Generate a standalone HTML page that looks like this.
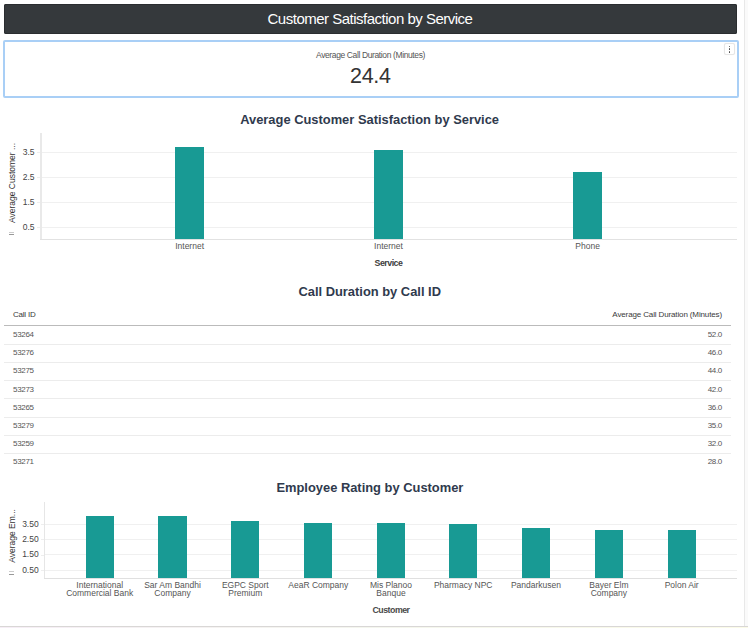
<!DOCTYPE html>
<html><head><meta charset="utf-8">
<style>
html,body{margin:0;padding:0;width:748px;height:628px;overflow:hidden;background:#fff;}
body{position:relative;font-family:"Liberation Sans",sans-serif;}
.a{position:absolute;white-space:nowrap;}
.c{transform:translateX(-50%);text-align:center;}
.r{transform:translateX(-100%);text-align:right;}
.hdr{left:4px;top:4px;width:732.7px;height:30px;background:#35393c;border-radius:2px;box-shadow:inset 0 0 0 1px #2a2d30;}
.kpi{left:3px;top:40px;width:732px;height:54px;border:2px solid #a9cff6;border-radius:2px;}
.menu{left:724px;top:43.2px;width:9px;height:10px;border:1px solid #e6e6e6;border-radius:2px;background:#fff;box-shadow:0 0 1px rgba(0,0,0,0.08);}
.dot{position:absolute;left:3.6px;width:1.8px;height:1.8px;background:#444;border-radius:1px;}
.ttl{font-weight:bold;font-size:12.9px;line-height:12.9px;color:#2f3a4d;}
.grid{position:absolute;height:1px;background:#f0f0f0;}
.bar{position:absolute;background:#189a94;}
.tick{font-size:8.5px;line-height:8.5px;color:#444;}
.xl{font-size:8.5px;line-height:8px;color:#555;}
.td{font-size:8px;line-height:8px;color:#555;letter-spacing:-0.3px;}
.sep{position:absolute;left:4px;width:727px;height:1px;background:#ececec;}
</style></head><body>
<!-- header -->
<div class="a hdr"></div>
<div class="a c" style="left:370px;top:10.7px;font-size:15px;line-height:15px;color:#fff;letter-spacing:-0.5px;">Customer Satisfaction by Service</div>

<!-- KPI -->
<div class="a kpi"></div>
<div class="a menu"><div class="dot" style="top:1.5px;width:1.6px;height:1.6px"></div><div class="dot" style="top:4.3px;width:1.6px;height:1.6px"></div><div class="dot" style="top:7.1px;width:1.6px;height:1.6px"></div></div>
<div class="a c" style="left:370.5px;top:50.5px;font-size:8.5px;line-height:8.5px;color:#555;letter-spacing:-0.38px;">Average Call Duration (Minutes)</div>
<div class="a c" style="left:370.3px;top:66.2px;font-size:21.5px;line-height:21.5px;color:#333;letter-spacing:-0.3px;">24.4</div>

<!-- chart 1 -->
<div class="a c ttl" style="left:369.6px;top:113.6px;">Average Customer Satisfaction by Service</div>
<div class="grid" style="left:40px;top:152px;width:697px;"></div>
<div class="grid" style="left:40px;top:177px;width:697px;"></div>
<div class="grid" style="left:40px;top:202px;width:697px;"></div>
<div class="grid" style="left:40px;top:226.5px;width:697px;"></div>
<div class="a" style="left:40px;top:132.5px;width:1.5px;height:107px;background:#e9e9e9;"></div>
<div class="a" style="left:40px;top:239.2px;width:697px;height:1.2px;background:#e2e2e2;"></div>
<div class="a" style="left:36.7px;top:152px;width:3.3px;height:1px;background:#eee;"></div>
<div class="a" style="left:36.7px;top:177px;width:3.3px;height:1px;background:#eee;"></div>
<div class="a" style="left:36.7px;top:202px;width:3.3px;height:1px;background:#eee;"></div>
<div class="a" style="left:36.7px;top:226.5px;width:3.3px;height:1px;background:#eee;"></div>
<div class="a r tick" style="left:34.6px;top:148px;">3.5</div>
<div class="a r tick" style="left:34.6px;top:172.8px;">2.5</div>
<div class="a r tick" style="left:34.6px;top:197.8px;">1.5</div>
<div class="a r tick" style="left:34.6px;top:222.6px;">0.5</div>
<div class="a" style="left:12.4px;top:182.5px;transform:translate(-50%,-50%) rotate(-90deg);font-size:8.5px;line-height:8.5px;color:#333;">Average Customer ...</div>
<div class="a" style="left:8.5px;top:231.5px;width:5px;height:1px;background:#ccc;"></div>
<div class="a" style="left:8.5px;top:234px;width:5px;height:1px;background:#999;"></div>
<div class="bar" style="left:175.3px;top:146.8px;width:28.7px;height:92.5px;"></div>
<div class="bar" style="left:374.4px;top:150px;width:28.5px;height:89.3px;"></div>
<div class="bar" style="left:573.3px;top:172.4px;width:28.6px;height:66.9px;"></div>
<div class="a c xl" style="left:189.6px;top:242px;">Internet</div>
<div class="a c xl" style="left:388.5px;top:242px;">Internet</div>
<div class="a c xl" style="left:587.6px;top:242px;">Phone</div>
<div class="a c" style="left:388.5px;top:259.1px;font-size:8.8px;line-height:8.8px;font-weight:bold;color:#404040;letter-spacing:-0.5px;">Service</div>

<!-- table -->
<div class="a c ttl" style="left:369.7px;top:285.6px;">Call Duration by Call ID</div>
<div class="a td" style="left:12.9px;top:311.1px;color:#3a3a3a;letter-spacing:-0.2px;">Call ID</div>
<div class="a r td" style="left:722px;top:311.1px;color:#3a3a3a;letter-spacing:-0.13px;">Average Call Duration (Minutes)</div>
<div class="a" style="left:4px;top:324.8px;width:727px;height:1.4px;background:#bbbbbb;"></div>
<div class="sep" style="top:343.8px"></div>
<div class="sep" style="top:362px"></div>
<div class="sep" style="top:380.2px"></div>
<div class="sep" style="top:398.4px"></div>
<div class="sep" style="top:416.6px"></div>
<div class="sep" style="top:434.8px"></div>
<div class="sep" style="top:453px"></div>
<div class="a td" style="left:13px;top:331.0px;">53264</div>
<div class="a td" style="left:13px;top:349.2px;">53276</div>
<div class="a td" style="left:13px;top:367.4px;">53275</div>
<div class="a td" style="left:13px;top:385.6px;">53273</div>
<div class="a td" style="left:13px;top:403.8px;">53265</div>
<div class="a td" style="left:13px;top:422.0px;">53279</div>
<div class="a td" style="left:13px;top:440.2px;">53259</div>
<div class="a td" style="left:13px;top:458.4px;">53271</div>
<div class="a r td" style="left:722px;top:331.0px;">52.0</div>
<div class="a r td" style="left:722px;top:349.2px;">46.0</div>
<div class="a r td" style="left:722px;top:367.4px;">44.0</div>
<div class="a r td" style="left:722px;top:385.6px;">42.0</div>
<div class="a r td" style="left:722px;top:403.8px;">36.0</div>
<div class="a r td" style="left:722px;top:422.0px;">35.0</div>
<div class="a r td" style="left:722px;top:440.2px;">32.0</div>
<div class="a r td" style="left:722px;top:458.4px;">28.0</div>

<!-- chart 2 -->
<div class="a c ttl" style="left:369.9px;top:481.8px;">Employee Rating by Customer</div>
<div class="grid" style="left:44.4px;top:523.6px;width:692.6px;"></div>
<div class="grid" style="left:44.4px;top:539.3px;width:692.6px;"></div>
<div class="grid" style="left:44.4px;top:554.3px;width:692.6px;"></div>
<div class="grid" style="left:44.4px;top:570.2px;width:692.6px;"></div>
<div class="a" style="left:44px;top:501.5px;width:1.2px;height:76.5px;background:#e6e6e6;"></div>
<div class="a" style="left:44px;top:577.8px;width:693px;height:1.2px;background:#e0e0e0;"></div>
<div class="a" style="left:41px;top:524px;width:3px;height:1px;background:#eee;"></div>
<div class="a" style="left:41px;top:539.3px;width:3px;height:1px;background:#eee;"></div>
<div class="a" style="left:41px;top:554.5px;width:3px;height:1px;background:#eee;"></div>
<div class="a" style="left:41px;top:570.2px;width:3px;height:1px;background:#eee;"></div>
<div class="a r tick" style="left:38.7px;top:519.6px;">3.50</div>
<div class="a r tick" style="left:38.7px;top:534.9px;">2.50</div>
<div class="a r tick" style="left:38.7px;top:550.1px;">1.50</div>
<div class="a r tick" style="left:38.7px;top:565.8px;">0.50</div>
<div class="a" style="left:12.2px;top:536px;transform:translate(-50%,-50%) rotate(-90deg);font-size:8.5px;line-height:8.5px;color:#333;">Average Em...</div>
<div class="a" style="left:8.5px;top:571px;width:5px;height:1px;background:#ccc;"></div>
<div class="a" style="left:8.5px;top:573.5px;width:5px;height:1px;background:#999;"></div>

<div class="bar" style="left:85.5px;top:515.7px;width:28.4px;height:62px;"></div>
<div class="bar" style="left:158.3px;top:515.7px;width:28.4px;height:62px;"></div>
<div class="bar" style="left:231.2px;top:520.9px;width:28.2px;height:56.8px;"></div>
<div class="bar" style="left:304.2px;top:523.1px;width:28.2px;height:54.6px;"></div>
<div class="bar" style="left:376.9px;top:523.1px;width:28.4px;height:54.6px;"></div>
<div class="bar" style="left:449px;top:524px;width:28.4px;height:53.7px;"></div>
<div class="bar" style="left:521.9px;top:528.3px;width:28.3px;height:49.4px;"></div>
<div class="bar" style="left:594.7px;top:529.7px;width:28.3px;height:48px;"></div>
<div class="bar" style="left:667.6px;top:530.1px;width:28.2px;height:47.6px;"></div>

<div class="a c xl" style="left:99.7px;top:581px;line-height:8px;">International<br>Commercial Bank</div>
<div class="a c xl" style="left:172.5px;top:581px;">Sar Am Bandhi<br>Company</div>
<div class="a c xl" style="left:245.3px;top:581px;">EGPC Sport<br>Premium</div>
<div class="a c xl" style="left:318.3px;top:581px;">AeaR Company</div>
<div class="a c xl" style="left:391px;top:581px;">Mis Planoo<br>Banque</div>
<div class="a c xl" style="left:463.2px;top:581px;">Pharmacy NPC</div>
<div class="a c xl" style="left:536px;top:581px;">Pandarkusen</div>
<div class="a c xl" style="left:608.9px;top:581px;">Bayer Elm<br>Company</div>
<div class="a c xl" style="left:681.7px;top:581px;">Polon Air</div>
<div class="a c" style="left:391px;top:605.6px;font-size:8.8px;line-height:8.8px;font-weight:bold;color:#4a4a4a;letter-spacing:-0.5px;">Customer</div>

<!-- right edge / bottom -->
<div class="a" style="left:744px;top:0;width:1px;height:626px;background:#e8e8e8;"></div>
<div class="a" style="left:745px;top:0;width:3px;height:626px;background:#fafafa;"></div>
<div class="a" style="left:0;top:625.6px;width:748px;height:1.4px;background:#d9d7d6;"></div>
<div class="a" style="left:0;top:627px;width:748px;height:1px;background:linear-gradient(90deg,#f6eef6,#f4f6ee 50%,#fbfbe8);"></div>
</body></html>
